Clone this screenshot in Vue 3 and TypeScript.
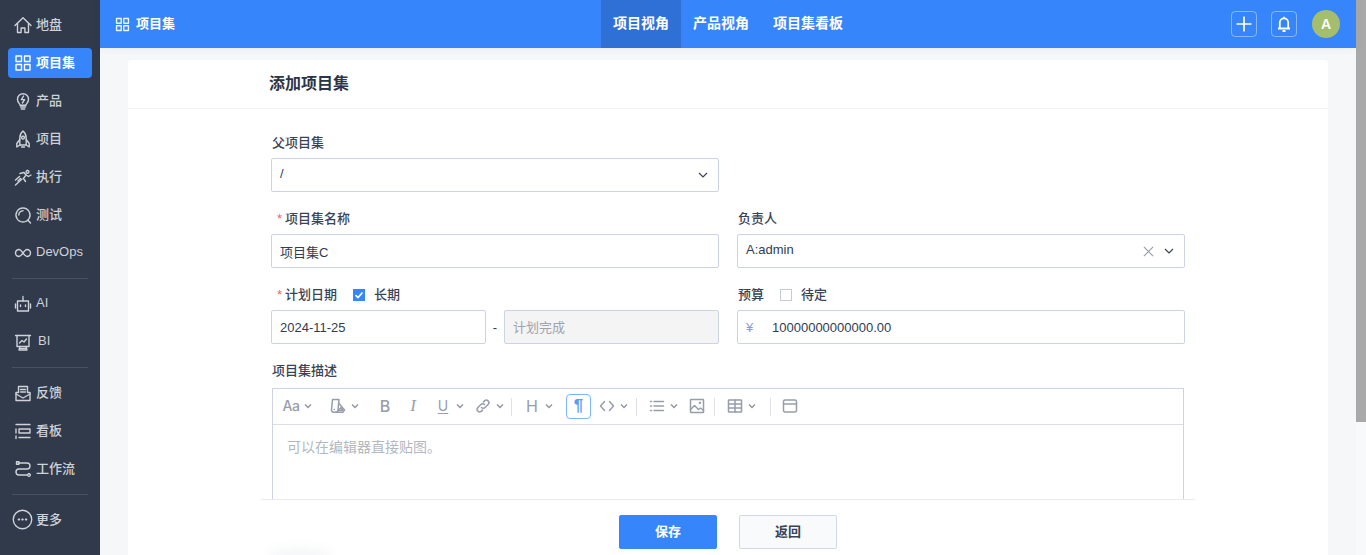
<script setup lang="ts">
interface NavItem { label: string; paths: string[]; active?: boolean; dots?: boolean; shift?: boolean }
const groups: NavItem[][] = [
  [
    { label: '地盘', paths: ['M2 10.500 10 2.800l8 7.700', 'M4.500 8.500v9h3.600v-4.500h3.800v4.500h3.600v-9'] },
    { label: '项目集', active: true, paths: ['M3 3h5.500v5.500H3z', 'M11.500 3H17v5.500h-5.500z', 'M3 11.500h5.500V17H3z', 'M11.500 11.500H17V17h-5.500z'] },
    { label: '产品', paths: ['M7 14.200c0-1.600-2.500-2.600-2.500-6a5.500 5.500 0 0 1 11 0c0 3.400-2.500 4.400-2.500 6z', 'M10.600 5 8.400 8.600h3.200L9.400 12', 'M7.500 16h5', 'M8.300 18h3.400'] },
    { label: '项目', paths: ['M10 2c2.400 2 3.200 4.600 3.200 7v7H6.800V9C6.800 6.600 7.600 4 10 2z', 'M6.800 10.500 3.800 14.500v3.500l3-2', 'M13.200 10.500l3 4v3.500l-3-2', 'M8.500 18h3', 'M10 7.200a1.400 1.400 0 1 0 .01 0'] },
    { label: '执行', paths: ['M2.500 18 9 12', 'M2.500 13l4-3.500', 'M7 6.500l4-1 2 2.500-2.500 3.500 2 3', 'M13 8l2.500 1.500 2.500-1.500', 'M7.500 11.500 5 14', 'M14.500 3.500a1.400 1.400 0 1 0 .01 0'] },
    { label: '测试', paths: ['M10 3a7 7 0 1 0 .01 0z', 'M14.800 15 17.500 18', 'M5.800 10A4.300 4.300 0 0 1 10 5.800'] },
    { label: 'DevOps', paths: ['M6 6.500a3.500 3.500 0 1 0 0 7c3 0 5-7 8-7a3.500 3.500 0 1 1 0 7c-3 0-5-7-8-7z'] }
  ],
  [
    { label: 'AI', paths: ['M4.500 7h11v10h-11z', 'M10 7V4', 'M10 2.500v.6', 'M7.500 11v1.500', 'M12.500 11v1.500', 'M2.500 10v4', 'M17.500 10v4'] },
    { label: 'BI', shift: true, paths: ['M2.500 3.500h15', 'M4 3.500v11h12v-11', 'M6.500 11 9 8.500l2 1.500 2.500-3', 'M7 14.500 6 18h8l-1-3.500', 'M7 16.500h6'] }
  ],
  [
    { label: '反馈', paths: ['M3 9.500h2.500V3.500h9v6H17v8H3z', 'M7.500 6.500h5', 'M7.500 9h5', 'M3 11l7 4 7-4'] },
    { label: '看板', paths: ['M3 3.500h14', 'M6 8h11v4H6z', 'M3 8v4', 'M3 15v2.500', 'M6 16.500h11'] },
    { label: '工作流', paths: ['M5.500 4H14a3 3 0 0 1 0 6H6a3 3 0 0 0 0 6h8', 'M3.500 2.800h2.400v2.400H3.500z', 'M16 14.800a1.300 1.300 0 1 0 .01 0'] }
  ],
  [
    { label: '更多', dots: true, paths: [] }
  ]
]

interface Tool { w: number; text?: string; cls?: string; paths?: string[]; chev?: boolean; sep?: boolean; on?: boolean }
const tools: Tool[] = [
  { w: 47, text: 'Aa', cls: 'aa', chev: true },
  { w: 47, chev: true, paths: ['M2.500 1.500h6.500L8 12a2.500 2.500 0 0 1-2.500 2.200h-2A2 2 0 0 1 1.500 12z', 'M9 5.500l5.500 6.500-1.500 2.200H5.500', 'M4.300 11.500h.01', 'M8.500 12.500l2.500-3 1.800 3z'] },
  { w: 28, text: 'B', cls: 'bold' },
  { w: 30, text: 'I', cls: 'ital' },
  { w: 40, text: 'U', cls: 'under', chev: true },
  { w: 36, chev: true, paths: ['M6.500 9.500a2.500 2.500 0 0 0 3.600 0l3-3a2.500 2.500 0 0 0-3.600-3.600l-1 1', 'M9.500 6.500a2.500 2.500 0 0 0-3.600 0l-3 3a2.500 2.500 0 0 0 3.600 3.600l1-1'] },
  { w: 13, sep: true },
  { w: 42, text: 'H', cls: 'head', chev: true },
  { w: 33, text: '¶', cls: 'para', on: true },
  { w: 37, chev: true, paths: ['M5.500 3.500 1.500 8l4 4.500', 'M10.500 3.500l4 4.500-4 4.500'] },
  { w: 13, sep: true },
  { w: 40, chev: true, paths: ['M5 3.500h9.500', 'M5 8h9.500', 'M5 12.500h9.500', 'M1.500 3.500h1', 'M1.500 8h1', 'M1.500 12.500h1'] },
  { w: 25, paths: ['M2 1.500h12a.5.5 0 0 1 .5.5v12a.5.5 0 0 1-.5.5H2a.5.5 0 0 1-.5-.5V2a.5.5 0 0 1 .5-.5z', 'M1.500 11.500 5.500 7.500l4 4 2-1.500 3 2.500', 'M10.500 4.500h.8v.8h-.8z'] },
  { w: 13, sep: true },
  { w: 43, chev: true, paths: ['M2 2h12a.5.5 0 0 1 .5.5v11a.5.5 0 0 1-.5.5H2a.5.5 0 0 1-.5-.5v-11A.5.5 0 0 1 2 2z', 'M1.500 6h13', 'M1.500 10h13', 'M8 2v12'] },
  { w: 12, sep: true },
  { w: 16, paths: ['M3 2h10a1.500 1.500 0 0 1 1.500 1.500v9A1.500 1.500 0 0 1 13 14H3a1.500 1.500 0 0 1-1.500-1.500v-9A1.500 1.500 0 0 1 3 2z', 'M1.500 6h13'] }
]
</script>

<template>
  <div class="page">
    <aside class="side">
      <template v-for="(group, g) in groups" :key="g">
        <div v-if="g > 0" class="rule"></div>
        <a v-for="item in group" :key="item.label" class="nav" :class="{ active: item.active, shift: item.shift }">
          <svg v-if="item.dots" class="more-icon" viewBox="0 0 20 20" fill="none" stroke="currentColor">
            <circle cx="10" cy="10" r="8.800" stroke-width="1.300" />
            <path d="M6.300 10h.6M9.700 10h.6M13.100 10h.6" stroke-width="1.800" stroke-linecap="round" />
          </svg>
          <svg v-else class="nav-icon" viewBox="0 0 20 20" fill="none" stroke="currentColor" stroke-width="1.400" stroke-linejoin="round" stroke-linecap="round">
            <path v-for="d in item.paths" :key="d" :d="d" />
          </svg>
          <span>{{ item.label }}</span>
        </a>
      </template>
    </aside>

    <div class="right">
      <header class="top">
        <div class="crumb">
          <svg viewBox="0 0 20 20" fill="none" stroke="currentColor" stroke-width="1.600" stroke-linejoin="round">
            <path d="M3 3h5.500v5.500H3zM11.500 3H17v5.500h-5.500zM3 11.500h5.500V17H3zM11.500 11.500H17V17h-5.500z" />
          </svg>
          <span>项目集</span>
        </div>
        <nav class="tabs">
          <a class="tab on">项目视角</a>
          <a class="tab">产品视角</a>
          <a class="tab">项目集看板</a>
        </nav>
        <div class="actions">
          <button class="act">
            <svg viewBox="0 0 16 16" fill="none" stroke="#fff" stroke-width="1.700"><path d="M8 .5v15M.5 8h15" /></svg>
          </button>
          <button class="act">
            <svg viewBox="0 0 16 16" fill="none" stroke="#fff" stroke-width="1.800" stroke-linejoin="round"><path d="M3.800 12.500V6.500a4.200 4.200 0 0 1 8.400 0v6zM2 12.500h12M8 .8v1.500M6.500 15h3" /></svg>
          </button>
          <div class="avatar">A</div>
        </div>
      </header>

      <main class="main">
        <section class="panel">
          <h1 class="title">添加项目集</h1>
          <div class="body">
            <form class="form">
              <div class="field">
                <div class="label">父项目集</div>
                <div class="input select">
                  <span>/</span>
                  <svg class="chev" viewBox="0 0 10 10" fill="none" stroke="#3c4353" stroke-width="1.200"><path d="M1 3l4 4 4-4" /></svg>
                </div>
              </div>
              <div></div>

              <div class="field">
                <div class="label"><i class="req">*</i>项目集名称</div>
                <div class="input">项目集C</div>
              </div>
              <div class="field">
                <div class="label">负责人</div>
                <div class="input select">
                  <span>A:admin</span>
                  <svg class="clear" viewBox="0 0 12 12" fill="none" stroke="#9aa0ab" stroke-width="1.300"><path d="M1 1l10 10M11 1 1 11" /></svg>
                  <svg class="chev" viewBox="0 0 10 10" fill="none" stroke="#3c4353" stroke-width="1.200"><path d="M1 3l4 4 4-4" /></svg>
                </div>
              </div>

              <div class="field">
                <div class="label">
                  <i class="req">*</i>计划日期
                  <span class="check on">
                    <svg viewBox="0 0 12 12" fill="none" stroke="#fff" stroke-width="1.600"><path d="M2.500 6.200 5 8.500l4.500-5" /></svg>
                  </span>
                  <span class="check-text">长期</span>
                </div>
                <div class="dates">
                  <div class="input">2024-11-25</div>
                  <span class="dash">-</span>
                  <div class="input off">计划完成</div>
                </div>
              </div>
              <div class="field">
                <div class="label">
                  预算
                  <span class="check"></span>
                  <span class="check-text">待定</span>
                </div>
                <div class="input money"><span class="yen">¥</span><span>10000000000000.00</span></div>
              </div>

              <div class="field wide">
                <div class="label tall">项目集描述</div>
                <div class="editor">
                  <div class="toolbar">
                    <template v-for="(t, i) in tools" :key="i">
                      <div class="tool" :style="{ width: t.w + 'px' }">
                        <i v-if="t.sep" class="sep"></i>
                        <span v-else-if="t.on" class="para-box">{{ t.text }}</span>
                        <span v-else-if="t.text" class="glyph" :class="t.cls">{{ t.text }}</span>
                        <svg v-else class="tool-icon" viewBox="0 0 16 16" fill="none" stroke="currentColor" stroke-width="1.500" stroke-linejoin="round" stroke-linecap="round">
                          <path v-for="d in t.paths" :key="d" :d="d" />
                        </svg>
                        <svg v-if="t.chev" class="tool-chev" viewBox="0 0 8 8" fill="none" stroke="currentColor" stroke-width="1.300"><path d="M1 2.500 4 5.500l3-3" /></svg>
                      </div>
                    </template>
                  </div>
                  <div class="content">可以在编辑器直接贴图。</div>
                </div>
              </div>
            </form>
          </div>
          <footer class="foot">
            <button class="btn primary" type="button">保存</button>
            <button class="btn" type="button">返回</button>
          </footer>
          <div class="smudge"></div>
        </section>
      </main>
    </div>
    <div class="scroll"><div class="thumb"></div></div>
  </div>
</template>

<style>
html, body { margin: 0; padding: 0; overflow: hidden; }
</style>

<style scoped>
.page {
  display: flex;
  width: 1366px;
  height: 555px;
  overflow: hidden;
  font-family: "Liberation Sans", "Noto Sans CJK SC", sans-serif;
  font-size: 13px;
  color: #313c52;
  background: #f6f7f9;
}
.side {
  flex: 0 0 100px;
  box-sizing: border-box;
  padding: 10px 8px 0;
  background: #313a4b;
  display: flex;
  flex-direction: column;
  gap: 8px;
}
.nav {
  height: 30px;
  display: flex;
  align-items: center;
  gap: 3px;
  padding-left: 5px;
  border-radius: 4px;
  color: #ced2d9;
  font-weight: 500;
  white-space: nowrap;
}
.nav span { padding-bottom: 4px; }
.nav.shift span { margin-left: 2px; }
.nav.active { background: #3785fb; color: #fff; font-weight: 700; }
.nav-icon { width: 20px; height: 20px; flex: none; margin-top: -1px; }
.more-icon { width: 21px; height: 21px; flex: none; margin-left: -1px; margin-top: -2px; }
.rule {
  height: 1px;
  margin: 2px 4px;
  background: #474f60;
}
.right { flex: 1; min-width: 0; display: flex; flex-direction: column; }
.top {
  height: 48px;
  flex: none;
  background: #3785fb;
  color: #fff;
  display: flex;
  align-items: center;
  position: relative;
  box-shadow: 0 1px 8px rgba(40, 50, 70, .06);
}
.crumb {
  display: flex;
  align-items: center;
  gap: 5px;
  padding-left: 14px;
  font-weight: 700;
  width: 501px;
  box-sizing: border-box;
}
.crumb span { padding-bottom: 4px; }
.crumb svg { width: 17px; height: 17px; opacity: .9; }
.tabs { display: flex; height: 100%; }
.tab {
  display: flex;
  align-items: center;
  padding: 0 12px 4px;
  font-size: 14px;
  font-weight: 700;
}
.tab.on { background: #2f70d7; }
.actions {
  margin-left: auto;
  display: flex;
  align-items: center;
  gap: 14px;
  padding-right: 16px;
}
.act {
  width: 26px;
  height: 26px;
  padding: 0;
  display: flex;
  align-items: center;
  justify-content: center;
  background: transparent;
  border: 1px solid rgba(255, 255, 255, .4);
  border-radius: 4px;
}
.act svg { width: 16px; height: 16px; }
.avatar {
  width: 28px;
  height: 28px;
  border-radius: 50%;
  background: #a5be6e;
  color: #fff;
  font-size: 14px;
  font-weight: 700;
  display: flex;
  align-items: center;
  justify-content: center;
  margin-left: 1px;
}
.main { flex: 1; min-height: 0; padding: 12px 28px 0; overflow: hidden; }
.panel {
  position: relative;
  background: #fff;
  border-radius: 4px 4px 0 0;
  height: 495px;
  display: flex;
  flex-direction: column;
}
.title {
  margin: 0;
  height: 49px;
  flex: none;
  box-sizing: border-box;
  padding-left: 141px;
  line-height: 47px;
  font-size: 16px;
  font-weight: 700;
  color: #2c3547;
  border-bottom: 1px solid #eff0f4;
}
.body { height: 390px; flex: none; overflow: hidden; }
.form {
  width: 914px;
  margin-left: 143px;
  padding-top: 25px;
  display: grid;
  grid-template-columns: 448px 448px;
  column-gap: 18px;
  row-gap: 18px;
}
.wide { grid-column: 1 / 3; }
.field { display: flex; flex-direction: column; }
.label {
  height: 16px;
  box-sizing: border-box;
  line-height: 14px;
  margin-bottom: 8px;
  padding: 2px 0 0 1px;
  display: flex;
  align-items: center;
  color: #394356;
  font-weight: 500;
}
.label.tall { margin-bottom: 10px; }
.req { font-style: normal; color: #f5645f; width: 10px; text-align: right; margin-right: 3px; }
.check {
  width: 12px;
  height: 12px;
  box-sizing: border-box;
  margin-left: 16px;
  border: 1px solid #c6cad6;
  display: flex;
  align-items: center;
  justify-content: center;
}
.check.on { background: #3785fb; border-color: #3785fb; }
.check svg { width: 12px; height: 12px; flex: none; }
.check-text { margin-left: 9px; }
.input {
  height: 34px;
  box-sizing: border-box;
  border: 1px solid #ced3e3;
  border-radius: 2px;
  padding: 0 8px;
  display: flex;
  align-items: center;
  color: #313c52;
  background: #fff;
}
.select span { flex: 1; padding-bottom: 4px; }
.chev { width: 10px; height: 10px; margin: 0 2px 0 0; }
.clear { width: 11px; height: 11px; margin-right: 10px; }
.dates { display: flex; align-items: center; }
.dates .input { flex: 0 0 215px; width: 215px; }
.dates .off { background: #f4f4f5; color: #9ea3ad; padding-bottom: 2px; }
.dash { width: 18px; text-align: center; }
.money .yen { color: #8c9ad6; width: 26px; }
.editor {
  margin-left: 1px;
  width: 912px;
  border: 1px solid #ced3e3;
  box-sizing: border-box;
  height: 160px;
}
.toolbar {
  height: 36px;
  box-sizing: border-box;
  padding-left: 10px;
  display: flex;
  align-items: center;
  border-bottom: 1px solid #dcdee6;
  color: #989dab;
}
.tool { flex: none; display: flex; align-items: center; height: 100%; position: relative; }
.tool-icon, .glyph { width: 16px; height: 16px; flex: none; }
.tool-icon { margin-top: -1px; }
.glyph {
  display: flex;
  align-items: center;
  justify-content: center;
  font-family: Inter, sans-serif;
  font-size: 16px;
  line-height: 16px;
  color: #989dab;
  margin-top: -2px;
}
.aa { font-size: 14px; letter-spacing: -.5px; font-weight: 500; }
.bold { font-weight: 500; font-size: 16px; }
.ital { font-style: italic; font-family: "Liberation Serif", serif; font-size: 17px; }
.under { text-decoration: underline; text-underline-offset: 2px; font-size: 14px; }
.head { font-size: 16px; }
.tool-chev { width: 8px; height: 8px; position: absolute; left: 21px; top: 13px; color: #8d93a1; }
.sep { width: 1px; height: 18px; background: #dfe1e6; }
.para-box {
  width: 25px;
  height: 25px;
  box-sizing: border-box;
  border: 1px solid #7ab5ff;
  border-radius: 4px;
  color: #5a9cf6;
  font-family: "Liberation Sans", sans-serif;
  font-size: 17px;
  font-weight: 700;
  display: flex;
  align-items: center;
  justify-content: center;
  padding-bottom: 1px;
}
.content {
  padding: 13px 14px;
  font-size: 14px;
  line-height: 18px;
  color: #b3b8c0;
}
.foot {
  width: 934px;
  margin-left: 133px;
  height: 56px;
  flex: none;
  box-sizing: border-box;
  border-top: 1px solid #e9eaee;
  padding-top: 15px;
  padding-left: 358px;
  display: flex;
  align-items: flex-start;
  gap: 22px;
  background: #fff;
}
.btn {
  width: 98px;
  height: 34px;
  padding: 0 0 4px;
  border-radius: 2px;
  border: 1px solid #d4d8e4;
  background: #f9fafc;
  color: #394356;
  font: 700 13px "Liberation Sans", "Noto Sans CJK SC", sans-serif;
}
.btn.primary { background: #3785fb; border-color: #3785fb; color: #fff; }
.smudge {
  position: absolute;
  left: 140px;
  top: 488px;
  width: 64px;
  height: 12px;
  border-radius: 50%;
  background: rgba(60, 70, 90, .05);
  filter: blur(5px);
}
.scroll { flex: 0 0 10px; background: #f8f9fb; }
.thumb { height: 422px; background: #a9a9a9; }
</style>
